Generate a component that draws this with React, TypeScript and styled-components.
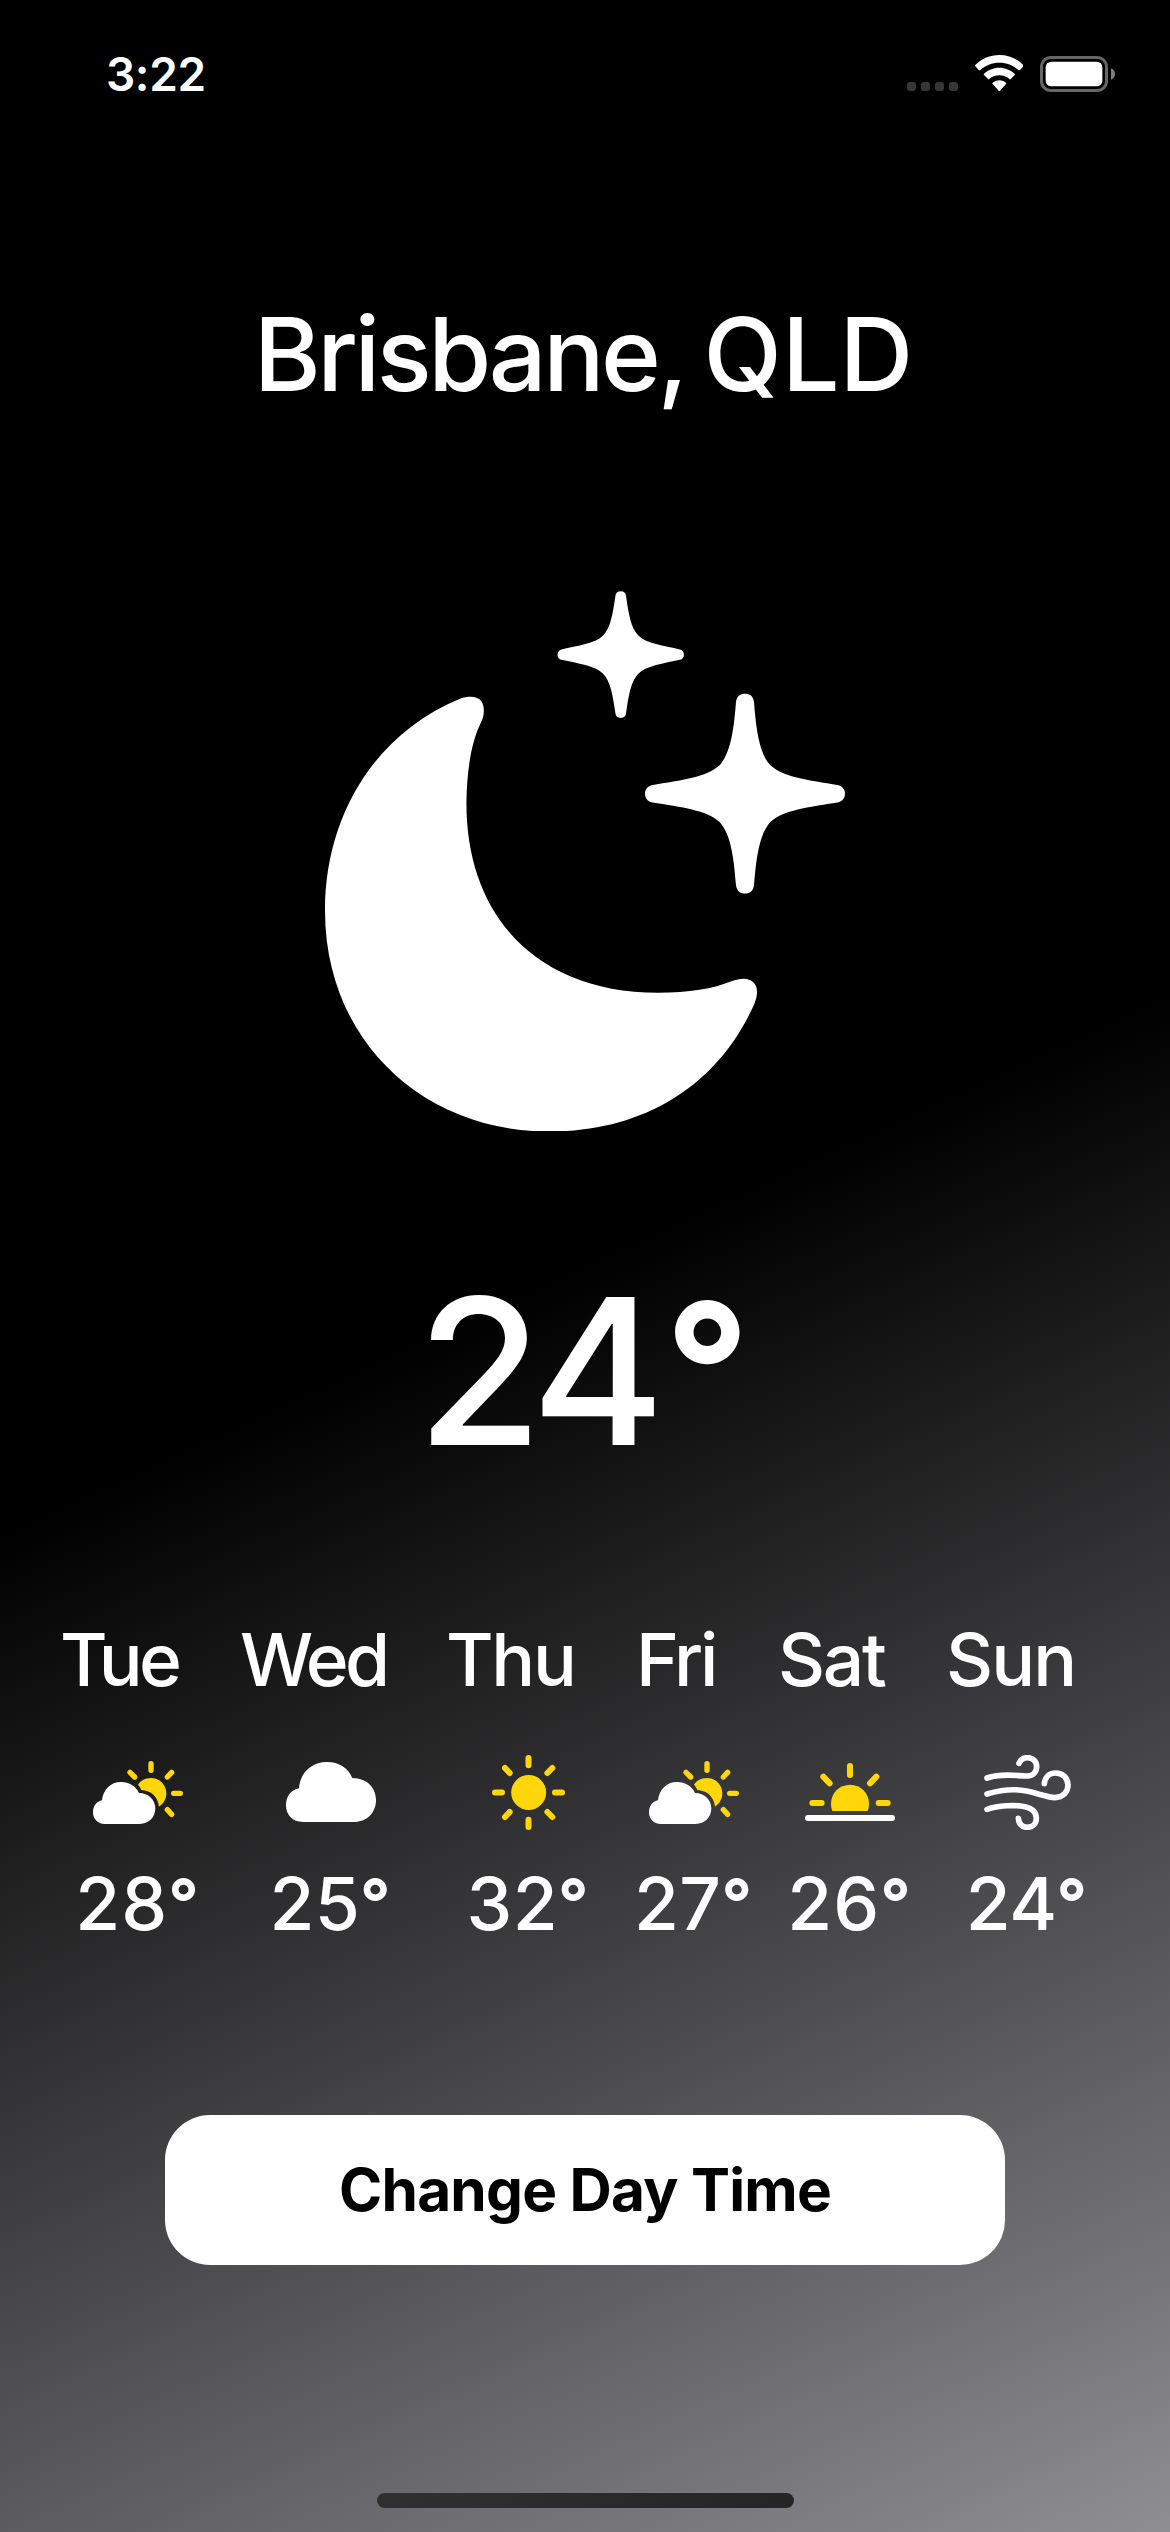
import React from "react";
import styled, { createGlobalStyle } from "styled-components";

const GlobalStyle = createGlobalStyle`
  * { box-sizing: border-box; }
  html, body { margin: 0; padding: 0; background: #000; }
`;

const Screen = styled.main`
  width: 1170px;
  height: 2532px;
  overflow: hidden;
  display: flex;
  flex-direction: column;
  align-items: center;
  color: #fff;
  font-family: Inter, "Liberation Sans", sans-serif;
  background: linear-gradient(155.2deg, #000 0%, #000 50%, #8e8e93 100%);
`;

const StatusBar = styled.header`
  width: 100%;
  height: 148px;
  flex: none;
  display: flex;
  justify-content: space-between;
  align-items: flex-start;
  padding: 0 55px 0 106px;
`;

const Clock = styled.time`
  height: 149px;
  line-height: 149px;
  font-size: 46px;
  font-weight: 600;
  letter-spacing: -0.4px;
`;

const StatusIcons = styled.div`
  display: flex;
  align-items: flex-start;
  padding-top: 55px;
`;

const Signal = styled.div`
  display: flex;
  gap: 5px;
  margin: 27px 16.7px 0 0;
`;

const SignalDot = styled.span`
  width: 9px;
  height: 9px;
  border-radius: 3px;
  background: #363636;
`;

const Battery = styled.svg`
  margin: 1px 0 0 16.6px;
`;

const City = styled.h1`
  margin: 146px 0 0;
  padding-right: 3px;
  height: 120px;
  line-height: 120px;
  font-size: 102px;
  font-weight: 500;
  white-space: nowrap;
`;

const Suburb = styled.span`
  letter-spacing: -3.5px;
  word-spacing: -4px;
`;

const NightIcon = styled.svg`
  display: block;
  flex: none;
  margin-top: 176.7px;
`;

const Temperature = styled.div`
  height: 240px;
  line-height: 240px;
  margin-top: 119.8px;
  padding-right: 3px;
  font-size: 203.5px;
  font-weight: 500;
  letter-spacing: -8px;
  white-space: nowrap;
`;

const Degree = styled.span<{ $lead?: number }>`
  margin-left: ${(p) => p.$lead ?? 0}px;
  font-size: 0.91em;
  font-weight: 700;
  line-height: 0;
  letter-spacing: 0;
  vertical-align: 0.05em;
`;

const DayRow = styled.div`
  width: 100%;
  display: flex;
  margin-top: 129.5px;
  padding-left: 60px;
`;

const DayName = styled.div<{ $width: number; $spacing: number }>`
  width: ${(p) => p.$width}px;
  letter-spacing: ${(p) => p.$spacing}px;
  flex: none;
  height: 80px;
  line-height: 80px;
  font-size: 73px;
  font-weight: 500;
  white-space: nowrap;
`;

const ForecastRow = styled.div`
  width: 100%;
  display: flex;
  margin-top: 54.5px;
  padding-left: 78px;
`;

const Forecast = styled.div<{ $gap: number }>`
  width: 120px;
  margin-right: ${(p) => p.$gap}px;
  flex: none;
  display: flex;
  flex-direction: column;
  align-items: center;
`;

const IconSlot = styled.div`
  height: 75px;
  display: flex;
  align-items: center;
  svg { display: block; }
`;

const DayTemp = styled.div<{ $spacing: number }>`
  height: 80px;
  line-height: 80px;
  margin-top: 34.5px;
  padding-right: 2px;
  font-size: 73px;
  font-weight: 500;
  letter-spacing: ${(p) => p.$spacing}px;
  white-space: nowrap;
`;

const ChangeButton = styled.button`
  width: 840px;
  height: 150px;
  flex: none;
  margin-top: 170.5px;
  padding: 0;
  border: 0;
  border-radius: 45px;
  background: #fff;
  color: #000;
  font-family: inherit;
  font-size: 58.5px;
  font-weight: 700;
  letter-spacing: -0.73px;
`;

const HomeIndicator = styled.div`
  width: 417px;
  height: 15px;
  flex: none;
  margin-top: 228px;
  border-radius: 8px;
  background: linear-gradient(90deg, #303030, #252525);
`;

const SUN = "#ffd60a";

type Pt = [number, number];

function starPath(cx: number, cy: number, quadrant: Pt[]) {
  const back = [...quadrant].reverse();
  const side = (pts: Pt[], sx: number, sy: number) =>
    "C" + pts.slice(1).map(([x, y]) => `${cx + sx * x} ${cy + sy * y}`).join(" ");
  return [
    `M${cx} ${cy + quadrant[0][1]}`,
    side(quadrant, 1, 1),
    side(back, 1, -1),
    side(quadrant, -1, -1),
    side(back, -1, 1),
    "Z",
  ].join(" ");
}

const smallStar: Pt[] = [
  [0, -171], [9, -171], [14, -167], [15, -158],
  [22, -112], [28, -72], [50, -51],
  [72, -30], [120, -24], [166, -14],
  [173, -12], [177, -7], [177, 0],
];

const bigStar: Pt[] = [
  [0, -270], [14, -270], [22, -264], [25, -249],
  [31, -180], [38, -110], [72, -76],
  [108, -44], [175, -37], [262, -23],
  [273, -20], [280, -11], [280, 0],
];

function MoonStars() {
  return (
    <NightIcon width="520" height="540.5" viewBox="42 56 1456 1461" preserveAspectRatio="none" fill="#fff">
      <path d="M420 347C448 338 470 341 480 354C489 366 489 392 480 409C452 462 439 540 438 630C438 940 640 1142 975 1142C1060 1142 1130 1131 1180 1111C1212 1099 1236 1102 1247 1121C1254 1133 1253 1150 1245 1170C1150 1380 950 1517 670 1517C310 1517 42 1265 42 920C42 660 185 440 420 347Z" />
      <path d={starPath(870, 228, smallStar)} />
      <path d={starPath(1218, 604, bigStar)} />
    </NightIcon>
  );
}

function CloudSun() {
  return (
    <svg width="90" height="63" viewBox="129 453 270 189">
      <g stroke={SUN} strokeWidth="16" strokeLinecap="round">
        <path d="M303 461V481M240 487L254 501M365 487L352 501M371 550H391M352 599L365 613" />
      </g>
      <path fill={SUN} d="M264 524C272 511 286 504 303 504C329 504 349 524 349 550C349 566 341 581 327 590C324 561 303 541 274 540C272 534 268 529 264 524Z" />
      <path fill="#fff" d="M164 642C143 642 129 627 129 607C129 588 140 574 156 571C159 539 182 516 213 516C238 516 258 529 267 549C295 549 316 569 316 595C316 622 296 642 269 642Z" />
    </svg>
  );
}

function Cloud() {
  return (
    <svg width="90" height="60" viewBox="708 456 270 180" fill="#fff">
      <path d="M758 636C728 636 708 615 708 586C708 559 723 540 747 535C750 489 784 456 831 456C867 456 895 474 907 504C949 504 978 532 978 570C978 609 950 636 911 636Z" />
    </svg>
  );
}

function Sun() {
  return (
    <svg width="73" height="75" viewBox="216 435 219 225">
      <circle cx="326" cy="547.5" r="52.5" fill={SUN} />
      <path stroke={SUN} strokeWidth="18" strokeLinecap="round" d="M325.500 444V466M325.500 629V651M225 547.500H246M405 547.500H426M255 474L269 489M397 474L382 489M255 621L269 606M397 621L382 606" />
    </svg>
  );
}

function SunHorizon() {
  return (
    <svg width="90" height="58" viewBox="135 459 270 174">
      <path fill={SUN} d="M217 603C214 596 213 589 213 581C213 549 238 524 270 524C302 524 327 549 327 581C327 589 326 596 323 603Z" />
      <path stroke={SUN} strokeWidth="18" strokeLinecap="round" d="M270 468V495M190 500L209 520M349 500L330 520M157 579H185M356 579H383" />
      <path stroke="#fff" strokeWidth="18" strokeLinecap="round" d="M144 624H396" />
    </svg>
  );
}

function Wind() {
  return (
    <svg width="87" height="75" viewBox="672 435 261 225" fill="none" stroke="#fff" strokeWidth="17" strokeLinecap="round">
      <path d="M681 504C730 487 775 499 802 498C819 497 830 486 830 470C830 455 819 443 803 443C790 443 781 450 777 460" />
      <path d="M681 552C750 532 790 538 835 552C858 558 870 563 884 563C908 562 924 547 924 525C924 504 908 489 887 489C867 489 855 502 853 521" />
      <path d="M681 598C715 586 765 584 795 590C817 595 829 608 829 625C829 641 818 652 802 652C786 652 777 642 775 625" />
    </svg>
  );
}

const days = [
  { name: "Tue", width: 180, spacing: -3.6 },
  { name: "Wed", width: 206, spacing: -3.7 },
  { name: "Thu", width: 190, spacing: -2.3 },
  { name: "Fri", width: 142, spacing: -3.1 },
  { name: "Sat", width: 168, spacing: -2.3 },
  { name: "Sun", width: 130, spacing: -1.9 },
];

const forecasts = [
  { Icon: CloudSun, temp: 28, gap: 73, spacing: 1 },
  { Icon: Cloud, temp: 25, gap: 77.5, spacing: 0.3 },
  { Icon: Sun, temp: 32, gap: 45.5, spacing: 0.3 },
  { Icon: CloudSun, temp: 27, gap: 36, spacing: 0.3 },
  { Icon: SunHorizon, temp: 26, gap: 57.5, spacing: 1 },
  { Icon: Wind, temp: 24, gap: 0, spacing: -0.5 },
];

export default function App() {
  return (
    <Screen>
      <GlobalStyle />
      <StatusBar>
        <Clock>3:22</Clock>
        <StatusIcons>
          <Signal>
            <SignalDot />
            <SignalDot />
            <SignalDot />
            <SignalDot />
          </Signal>
          <svg width="48.700" height="36" viewBox="254 45 146 108" fill="#fff">
            <path d="M327 45C355 45 380 56 399 75Q401 77 399 79L389 90Q387 92 384 90C369 76 349 68 327 68C305 68 285 76 270 90Q267 92 265 90L255 79Q253 77 255 75C274 56 299 45 327 45Z" />
            <path d="M327 83C345 83 361 90 373 101Q375 103 373 105L361 117Q359 119 357 117C349 110 339 106 327 106C315 106 305 110 297 117Q295 119 293 117L281 105Q279 103 281 101C293 90 309 83 327 83Z" />
            <path d="M327 121C335 121 342 124 347 128Q349 130 347 132L329 152Q327 154 325 152L307 132Q305 130 307 128C312 124 319 121 327 121Z" />
          </svg>
          <Battery width="75" height="36" viewBox="450 48 225 108">
            <rect x="454.500" y="52.500" width="195" height="99" rx="28" fill="none" stroke="#666" strokeWidth="9" />
            <rect x="467" y="65" width="170" height="74" rx="17" fill="#fff" />
            <path d="M663 85C670 88 675 94 675 102C675 110 670 116 663 119Z" fill="#808080" />
          </Battery>
        </StatusIcons>
      </StatusBar>
      <City>
        <Suburb>Brisbane, </Suburb>QLD
      </City>
      <MoonStars />
      <Temperature>
        24<Degree $lead={8}>°</Degree>
      </Temperature>
      <DayRow>
        {days.map((d) => (
          <DayName key={d.name} $width={d.width} $spacing={d.spacing}>
            {d.name}
          </DayName>
        ))}
      </DayRow>
      <ForecastRow>
        {forecasts.map(({ Icon, temp, gap, spacing }) => (
          <Forecast key={temp} $gap={gap}>
            <IconSlot>
              <Icon />
            </IconSlot>
            <DayTemp $spacing={spacing}>
              {temp}
              <Degree>°</Degree>
            </DayTemp>
          </Forecast>
        ))}
      </ForecastRow>
      <ChangeButton>Change Day Time</ChangeButton>
      <HomeIndicator />
    </Screen>
  );
}
